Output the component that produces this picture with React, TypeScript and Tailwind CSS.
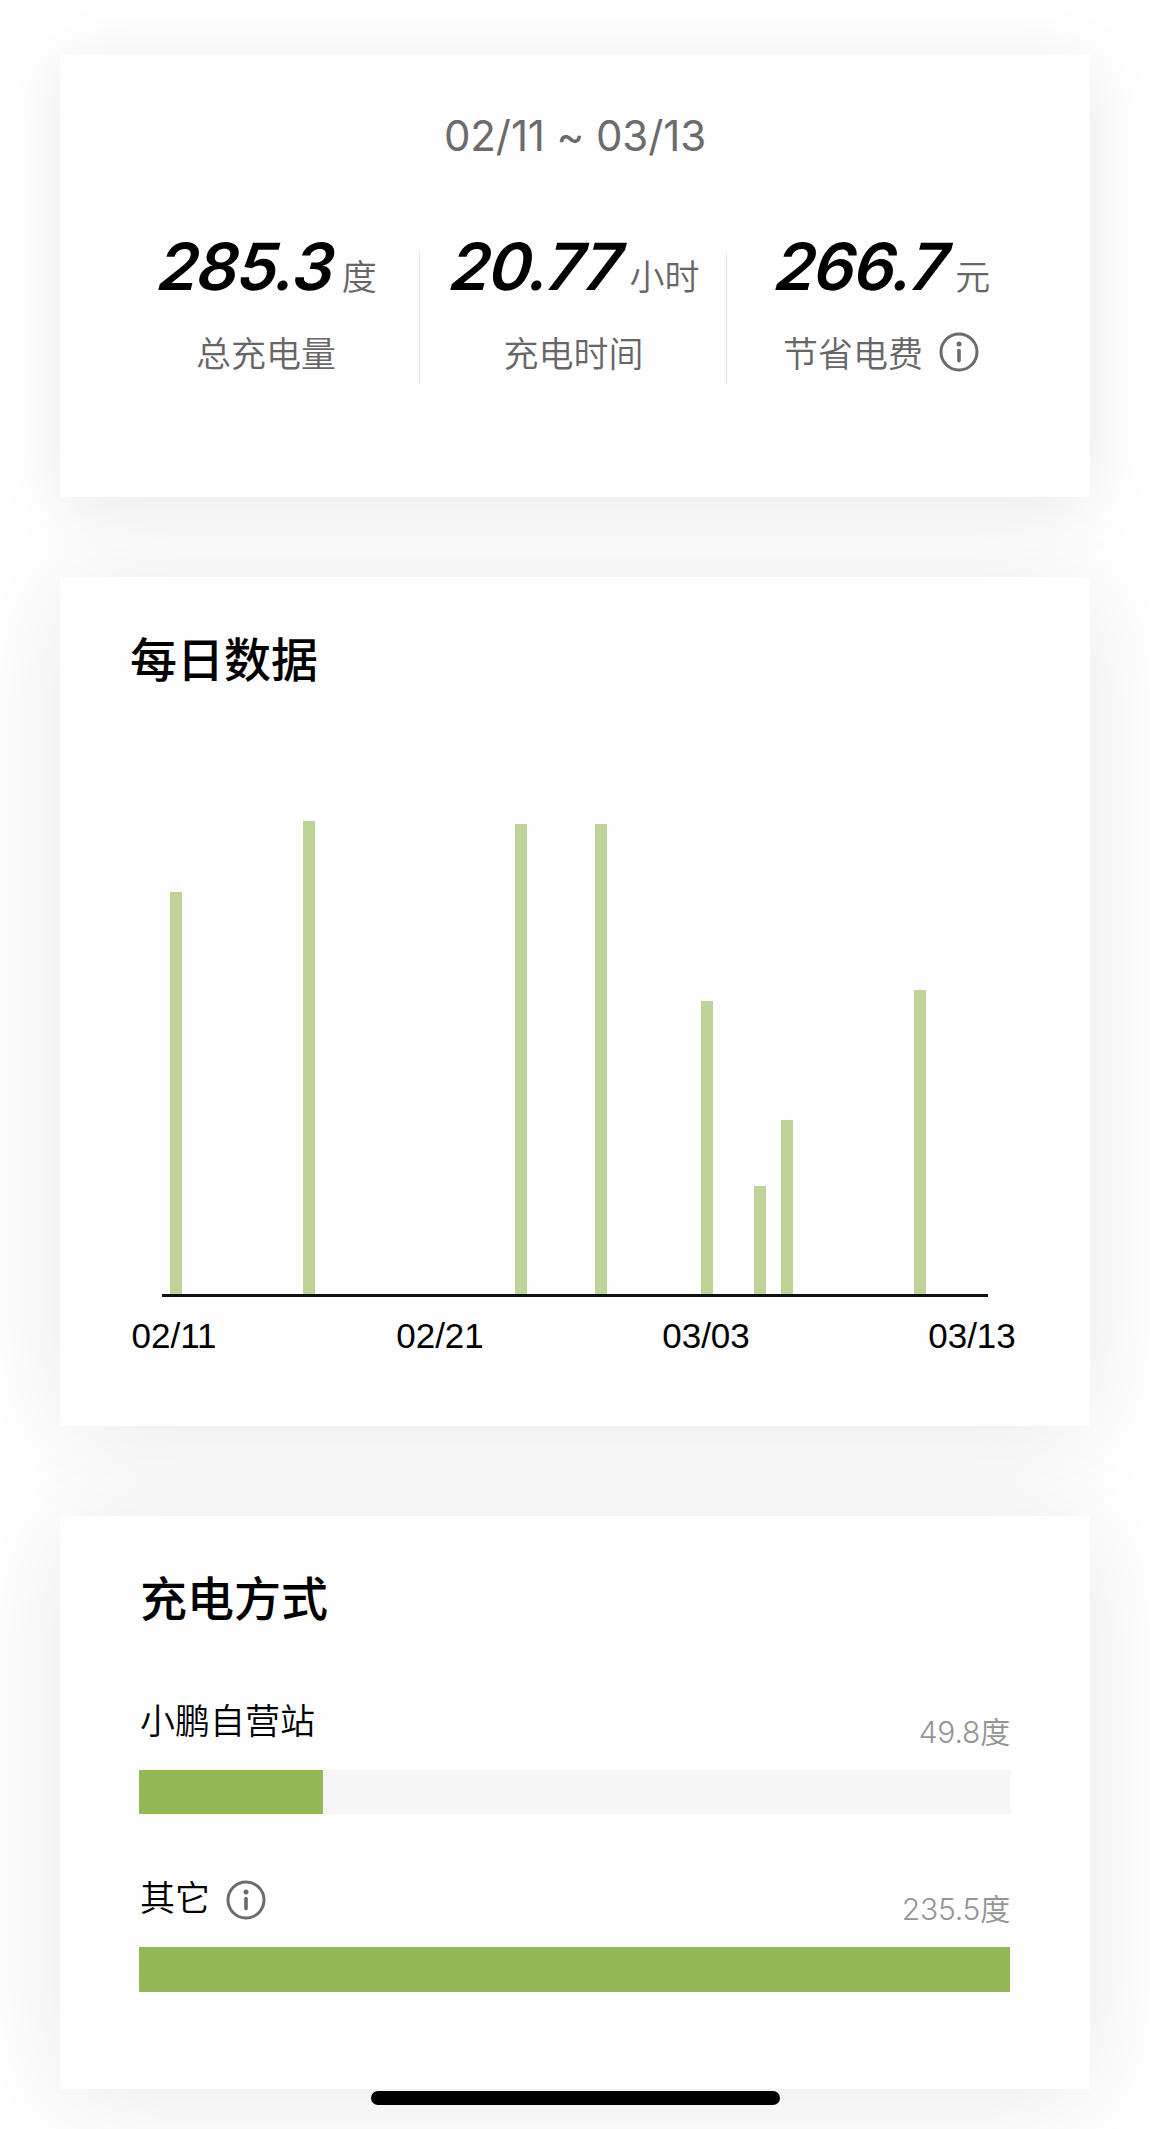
const summary = [
  { value: '285.3', unit: '度', label: '总充电量', column: 'w-[359px] pl-[53px]' },
  { value: '20.77', unit: '小时', label: '充电时间', column: 'w-[307px] pl-[2px]' },
  { value: '266.7', unit: '元', label: '节省电费', column: 'w-[364px] pr-[54px]', info: true },
];

// left = offset from the start of the axis, height in px
const dailyBars = [
  { date: '02/11', left: 8, height: 402 },
  { date: '02/16', left: 141, height: 473 },
  { date: '02/24', left: 353, height: 470 },
  { date: '02/27', left: 433, height: 470 },
  { date: '03/03', left: 539, height: 293 },
  { date: '03/05', left: 592, height: 108 },
  { date: '03/06', left: 619, height: 174 },
  { date: '03/11', left: 752, height: 304 },
];

const axisLabels = ['02/11', '02/21', '03/03', '03/13'];

const methods = [
  { name: '小鹏自营站', amount: '49.8度', percent: 21.15, bar: 'h-[44px]' },
  { name: '其它', amount: '235.5度', percent: 100, bar: 'h-[45px]', info: true },
];

function InfoIcon() {
  return (
    <svg className="size-10 shrink-0 text-[#6b6b6b]" viewBox="0 0 40 40" fill="none">
      <circle cx="20" cy="20" r="18" stroke="currentColor" strokeWidth="3" />
      <circle cx="20" cy="12" r="2.5" fill="currentColor" />
      <path d="M20 18.6v10" stroke="currentColor" strokeWidth="3.6" strokeLinecap="round" />
    </svg>
  );
}

function SummaryCard() {
  return (
    <section className="h-[443px] bg-[#fefefe] shadow-[0_10px_64px_rgba(0,0,0,0.09)]">
      <p className="pt-[52px] text-center font-['Inter'] text-[42px] leading-[60px] font-[380] tracking-[-0.1px] text-[#6b6b6b]">
        02/11 ~ 03/13
      </p>
      <div className="relative mt-[61px] flex">
        {summary.map((item) => (
          <div key={item.label} className={`flex flex-col ${item.column}`}>
            <div className="flex h-20 items-baseline justify-center pl-[4px] whitespace-nowrap">
              <span className="inline-block -skew-x-[5deg] font-['Inter'] text-[65px] leading-[80px] font-semibold tracking-[-1.4px] text-black italic">
                {item.value}
              </span>
              <span className="ml-[8px] text-[35px] font-[350] text-[#666]">{item.unit}</span>
            </div>
            <div className="mt-[25px] flex h-10 items-center justify-center gap-4 text-[35px] font-[350] text-[#666]">
              <span>{item.label}</span>
              {item.info && <InfoIcon />}
            </div>
          </div>
        ))}
        <div className="absolute top-[25px] left-[359px] h-[132px] w-px bg-[#e6e6e6]" />
        <div className="absolute top-[25px] left-[666px] h-[132px] w-px bg-[#e6e6e6]" />
      </div>
    </section>
  );
}

function DailyCard() {
  return (
    <section className="mt-20 h-[849px] bg-[#fefefe] shadow-[0_8px_100px_rgba(0,0,0,0.09)]">
      <h2 className="pt-[44px] pl-[70px] text-[47px] leading-[72px] font-medium text-black">每日数据</h2>
      <div className="relative mx-[102px] mt-[100px] h-[504px] w-[826px] border-b-[3px] border-[#111]">
        {dailyBars.map((bar) => (
          <div
            key={bar.date}
            className="absolute bottom-0 w-3 bg-[#bdd397]"
            style={{ left: bar.left, height: bar.height }}
          />
        ))}
      </div>
      <div className="ml-[64px] flex w-[898px] justify-between pt-[17px] font-['Liberation_Sans'] text-[35px] leading-[44px] text-black">
        {axisLabels.map((label) => (
          <span key={label} className="w-[100px] text-center">
            {label}
          </span>
        ))}
      </div>
    </section>
  );
}

function MethodCard() {
  return (
    <section className="mt-[90px] h-[573px] bg-[#fefefe] px-[79px] shadow-[0_8px_100px_rgba(0,0,0,0.09)]">
      <h2 className="pt-[44px] pl-px text-[47px] leading-[72px] font-medium text-black">充电方式</h2>
      <div className="mt-[58px] flex flex-col gap-[53px]">
        {methods.map((method) => (
          <div key={method.name} className="w-[871px]">
            <div className="flex h-20 items-start justify-between">
              <div className="flex items-center gap-4 pl-px text-[35px] leading-[58px] font-[350] text-black">
                <span>{method.name}</span>
                {method.info && (
                  <span className="pt-[7px]">
                    <InfoIcon />
                  </span>
                )}
              </div>
              <span className="pt-[22px] font-['Inter','Noto_Sans_CJK_SC',sans-serif] text-[30px] leading-10 font-[350] tracking-[-0.2px] text-[#949494]">
                {method.amount}
              </span>
            </div>
            <div className={`bg-[#f6f6f6] ${method.bar}`}>
              <div className="h-full bg-[#94b856]" style={{ width: `${method.percent}%` }} />
            </div>
          </div>
        ))}
      </div>
    </section>
  );
}

export default function App() {
  return (
    <main className="relative h-[2129px] w-[1150px] overflow-hidden bg-white px-[60px] pt-[54px] font-['Noto_Sans_CJK_SC',sans-serif]">
      <SummaryCard />
      <DailyCard />
      <MethodCard />
      <div className="absolute top-[2091px] left-[371px] h-[14px] w-[409px] rounded-full bg-black" />
    </main>
  );
}
